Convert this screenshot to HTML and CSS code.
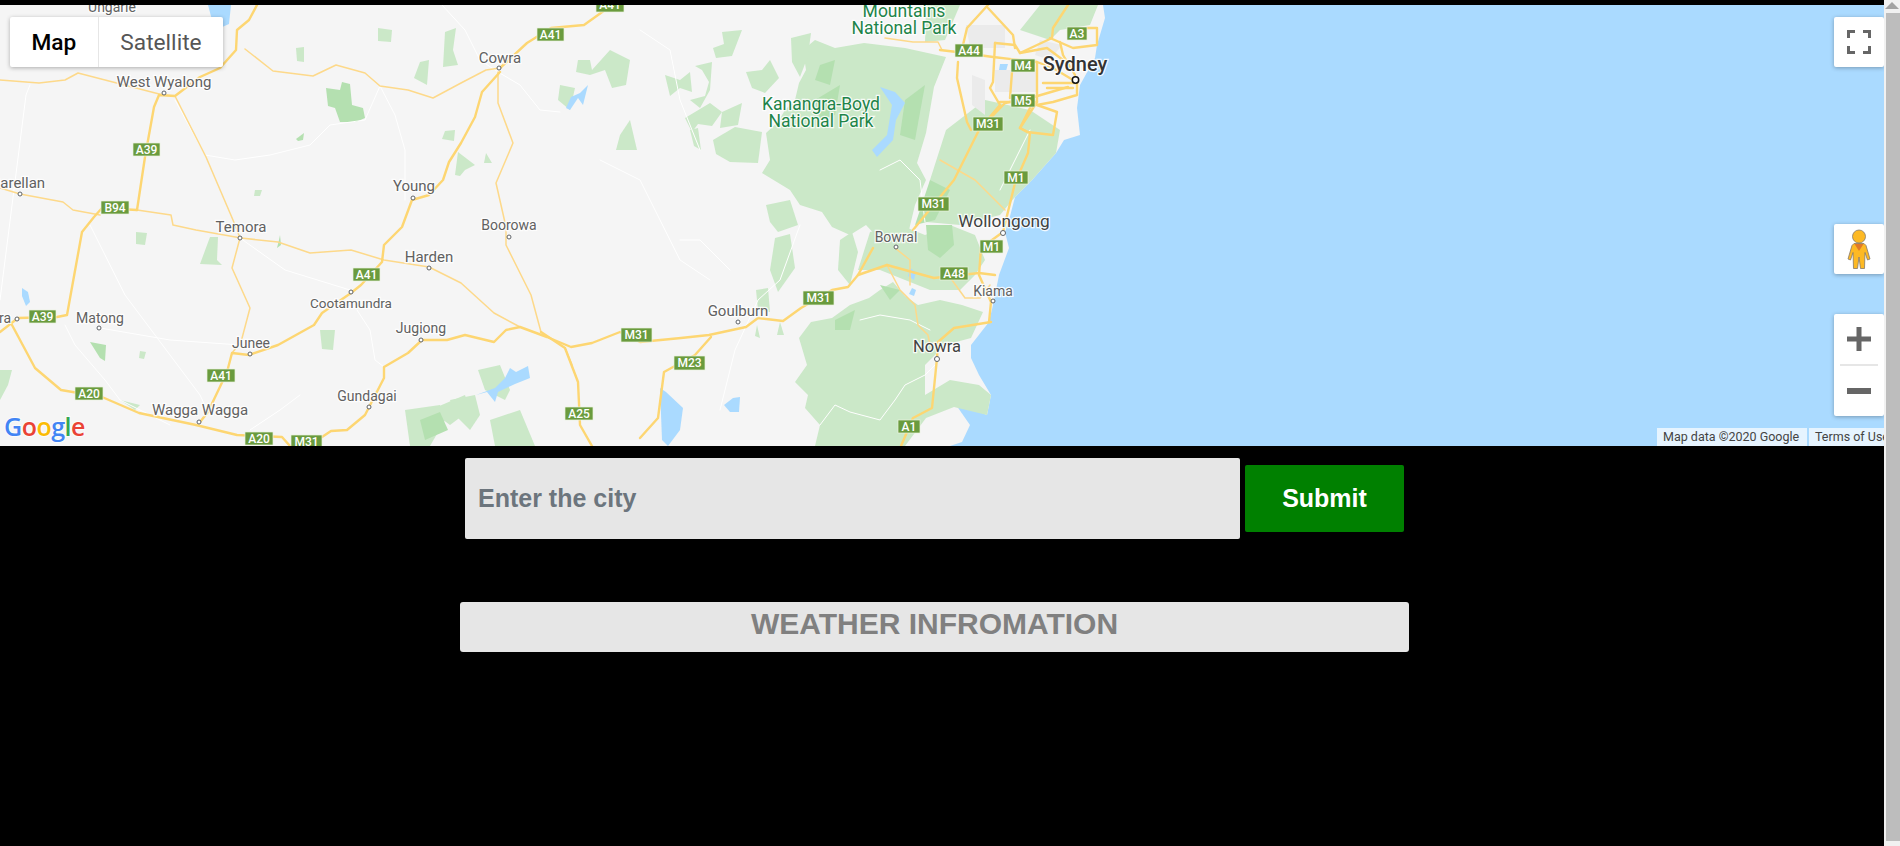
FILE: index.html
```html
<!DOCTYPE html>
<html lang="en">
<head>
    <meta charset="UTF-8">
    <title>Weather Map</title>
    <link rel="stylesheet" href="styles.css">
</head>
<body>

<div class="page">
    <div class="content">

        <div class="map">
            <svg class="map-canvas" viewBox="0 5 1884 441" width="1884" height="441">
                <!-- sea and coast -->
                <path class="water" d="M1103 5L1105 18 1097 45 1095 58 1080 85 1077 108 1080 135 1064 140 1056 153 1032 180 1015 197 1009 220 1005 232 1009 248 999 275 993 305 989 322 971 345 971 358 979 375 991 395 987 415 954 402 970 425 962 442 950 446H1884V5Z"/>

                <!-- parks, light -->
                <path class="park" d="M864 43L905 48 946 57 934 87 926 133 917 163 926 180 915 205 909 230 880 240 866 225 850 235 832 227 822 212 800 205 790 190 762 173 770 160 766 133 778 122 785 110 795 100 799 83 806 70 803 50 815 40 835 48Z"/>
                <path class="park" d="M811 322L832 318 850 305 869 298 880 290 893 282 905 296 918 305 940 300 962 305 983 312 971 338 945 345 925 365 925 395 950 380 979 385 991 395 987 415 954 407 926 418 905 446H815L820 425 805 408 808 395 795 382 807 365 799 338Z"/>
                <path class="park" d="M946 130L985 100 1030 110 1060 130 1056 153 1032 180 1015 197 1000 215 960 225 926 222 930 180Z"/>
                <path class="park" d="M926 5L960 5 945 40 925 42Z"/>
                <path class="park" d="M1040 5H1098L1090 25 1060 30 1050 40 1020 30Z"/>
                <path class="park" d="M870 232L900 225 925 235 950 225 975 235 985 260 975 275 960 290 930 290 905 280 880 270 858 270Z"/>
                <path class="park" d="M840 240L852 232 858 252 850 285 838 270Z"/>
                <!-- scattered bush west of the ranges -->
                <path class="park" d="M665 75L680 80 690 72 692 92 680 88 670 96Z"/>
                <path class="park" d="M690 100L705 96 709 82 702 70 695 66 712 62 710 90 700 108Z"/>
                <path class="park" d="M685 118L710 103 722 112 712 126 698 124 692 132Z"/>
                <path class="park" d="M722 112L742 103 738 125 720 128Z"/>
                <path class="park" d="M690 130L698 128 701 150 694 146Z"/>
                <path class="park" d="M713 140L735 127 762 132 758 163 730 162 716 154Z"/>
                <path class="park" d="M713 48L724 44 722 32 742 30 732 56 716 58Z"/>
                <path class="park" d="M746 72L762 70 770 60 779 78 765 93 752 88Z"/>
                <path class="park" d="M791 38L811 33 808 56 800 77 792 62Z"/>
                <path class="park" d="M766 205L790 200 798 225 778 232 770 222Z"/>
                <path class="park" d="M775 238L790 234 795 268 778 292 770 270Z"/>
                <path class="park" d="M756 290L768 288 770 312 758 310Z"/>
                <path class="park" d="M757 325L760 338 755 336Z"/>
                <path class="park" d="M780 322L784 335 777 335Z"/>
                <path class="park" d="M378 28L392 30 391 42 378 41Z"/>
                <path class="park" d="M296 48L304 47 304 62 297 61Z"/>
                <path class="park" d="M445 32L456 28 453 50 458 65 443 67Z"/>
                <path class="park" d="M420 62L429 60 427 85 414 78Z"/>
                <path class="park" d="M445 131L455 130 454 141 442 139Z"/>
                <path class="park" d="M458 152L475 165 465 170 460 176 455 175Z"/>
                <path class="park" d="M486 153L492 163 484 163Z"/>
                <path class="park" d="M255 190L262 190 260 196 254 196Z"/>
                <path class="park" d="M578 60L590 60 592 70 610 50 630 60 626 85 612 88 605 70 590 75 576 72Z"/>
                <path class="park" d="M620 135L630 120 637 150 616 150Z"/>
                <path class="park" d="M560 85L575 88 570 110 558 100Z"/>
                <path class="park" d="M136 232L147 233 145 245 136 244Z"/>
                <path class="park" d="M210 237L218 237 217 260 222 265 200 264Z"/>
                <path class="park" d="M320 330L335 330 333 350 322 349Z"/>
                <path class="park" d="M140 351L146 352 144 359 139 358Z"/>
                <path class="park" d="M0 370L12 370 8 385 0 400Z"/>
                <path class="park" d="M120 400L140 405 135 410Z"/>
                <path class="park" d="M478 370L500 365 510 390 505 400 485 390Z"/>
                <path class="park" d="M405 410L440 405 445 420 430 446H410Z"/>
                <path class="park" d="M450 400L475 395 480 415 470 430 455 415Z"/>
                <path class="park" d="M490 420L520 410 535 446H495Z"/>
                <path class="park" d="M430 410L465 395 470 410 450 425Z"/>

                <!-- parks, darker patches -->
                <path class="park-dark" d="M326 88L340 90 342 82 350 84 352 105 363 108 365 118 356 122 340 122 335 108 328 106Z"/>
                <path class="park-dark" d="M296 139L304 133 303 140 298 141Z"/>
                <path class="park-dark" d="M280 235L281 245 277 248 279 240Z"/>
                <path class="park-dark" d="M90 342L106 345 105 361 100 358 95 350Z"/>
                <path class="park-dark" d="M926 225L952 225 954 245 940 258 928 250Z"/>
                <path class="park-dark" d="M835 320L855 310 850 330 835 330Z"/>
                <path class="park-dark" d="M880 285L900 290 890 300Z"/>
                <path class="park-dark" d="M820 65L835 60 830 85 815 80Z"/>
                <path class="park-dark" d="M815 100L840 85 835 115 820 120Z"/>
                <path class="park-dark" d="M905 100L925 85 915 140 900 135Z"/>
                <path class="park-dark" d="M930 180L950 190 935 220 915 225Z"/>
                <path class="park-dark" d="M420 420L440 412 448 430 425 440Z"/>

                <!-- lakes -->
                <path class="water" d="M208 5H231L229 24 220 28 212 20Z"/>
                <path class="water" d="M22 288L28 292 30 302 26 306 22 296Z"/>
                <path class="water" d="M476 395L495 388 505 378 510 368 516 372 528 366 530 378 515 384 498 392 495 402 487 392Z"/>
                <path class="water" d="M660 388L666 392 683 408 680 430 668 446 662 440Z"/>
                <path class="water" d="M724 405L733 398 740 397 739 412 730 412Z"/>
                <path class="water" d="M880 87L895 92 905 103 896 120 893 140 877 157 872 150 887 135 892 105Z"/>
                <path class="water" d="M566 108L571 97 580 93 588 85 583 105 578 98 570 110Z"/>
                <path class="water" d="M910 268L916 272 914 280 908 276Z"/>
                <path class="water" d="M912 288L916 290 914 296 909 294Z"/>
                <path class="water" d="M1000 64H1008L1006 71 999 70Z"/>

                <!-- urban grey -->
                <path class="urban" d="M966 25L1005 25 1005 48 970 48Z"/>
                <path class="urban" d="M995 70L1036 70 1036 92 995 92Z"/>
                <path class="urban" d="M972 75L985 80 985 115 972 105Z"/>
                <path class="urban" d="M1040 40L1062 45 1050 60 1035 55Z"/>

                <!-- minor white roads -->
                <g class="road-white">
                    <polyline points="0,300 26,95 30,85"/>
                    <polyline points="175,100 205,155 235,160 270,155 310,145 330,125 365,120 380,86 395,115 405,150 405,200"/>
                    <polyline points="442,5 465,30 480,60 498,72 520,85 540,110 560,112"/>
                    <polyline points="90,225 125,295 200,395 208,412"/>
                    <polyline points="240,238 285,270 350,290"/>
                    <polyline points="100,328 170,340 240,345"/>
                    <polyline points="65,325 75,345 105,380 120,400 170,425"/>
                    <polyline points="357,310 370,330 375,360 384,367"/>
                    <polyline points="250,430 280,410 300,395"/>
                    <polyline points="600,160 640,180 660,220 680,260 710,280"/>
                    <polyline points="640,30 670,50 680,100 700,150"/>
                    <polyline points="680,240 700,240 730,270"/>
                    <polyline points="800,225 780,280 758,300 735,350 720,410"/>
                    <polyline points="820,425 835,405 850,412 880,420 895,400 905,385 925,375 935,365"/>
                    <polyline points="880,170 900,160 920,180 925,222"/>
                    <polyline points="860,320 880,315 910,320 930,330"/>
                    <polyline points="1000,190 1010,170 1030,130"/>
                </g>

                <!-- highways -->
                <g class="road-minor">
                    <polyline points="175,96 206,157 233,220 240,238 232,268 250,308 241,342 232,353"/>
                    <polyline points="498,72 498,103 513,143 496,183 506,227 506,245 531,295 541,332"/>
                    <polyline points="245,49 273,71 313,76 336,65 365,73 380,86 408,90 433,98 461,83 486,70 500,68"/>
                    <polyline points="0,80 39,83 65,80 78,73 163,95"/>
                    <polyline points="0,188 20,194 63,202 73,210 100,215"/>
                    <polyline points="137,210 171,215 173,225 196,230 241,238 278,242 310,253 351,250 384,260 429,267 461,283 494,313 520,327"/>
                    <polyline points="885,38 913,42 938,42 942,50"/>
                    <polyline points="887,265 900,290 915,305 918,325 928,335 930,345 938,342"/>
                    <polyline points="895,248 910,260 910,285"/>
                    <polyline points="952,280 965,298 980,298 990,285"/>
                    <polyline points="940,160 975,180 1005,210"/>
                    <polyline points="565,348 572,365"/>
                </g>
                <g class="road-major">
                    <polyline points="257,5 249,20 237,30 236,50 220,68 200,77 175,96 159,95 154,107 145,157 137,210"/>
                    <polyline points="137,210 102,208 94,217 82,232 67,315 57,317 18,318 0,332"/>
                    <polyline points="500,68 527,43 551,28 584,25 612,5"/>
                    <polyline points="500,72 482,92 475,117 461,143 449,162 443,180 429,195 412,200 402,227 384,245 382,262 361,285 351,293 322,313 314,325 278,345 249,355 232,353 227,372 208,412 200,422"/>
                    <polyline points="12,325 35,368 61,390 102,397 139,413 196,425 237,435 282,437 290,446"/>
                    <polyline points="322,437 331,431 347,430 365,415 384,378 384,367 408,353 422,340 447,340 465,335 494,342 506,330 520,327 547,337 571,347 592,343 620,332 640,342 681,338 709,335 746,327 758,318 783,321 801,308 832,290 848,287 858,275 887,265"/>
                    <polyline points="541,332 565,348 578,382 580,425 592,446"/>
                    <polyline points="711,337 695,355 664,372 658,418 640,438"/>
                    <polyline points="873,248 858,275"/>
                    <polyline points="913,230 954,180 979,130 1005,103 1034,97 1068,87"/>
                    <polyline points="887,265 934,278 979,273 995,275"/>
                    <polyline points="991,322 954,328 938,342 937,358 932,408 913,418 901,446"/>
                    <polyline points="1003,232 981,248 979,275 991,302 989,322"/>
                    <polyline points="1003,232 1015,183 1028,153 1030,133 1020,128 1034,100"/>
                    <polyline points="940,50 957,52 993,57 1037,62 1053,68 1073,80"/>
                    <polyline points="988,5 967,28 963,45"/>
                    <polyline points="988,8 1013,35 1015,48"/>
                    <polyline points="958,62 957,78 967,122 971,130"/>
                    <polyline points="995,43 993,82 990,88 1000,105 983,125"/>
                    <polyline points="995,43 1015,45 1020,53 1047,48 1063,60"/>
                    <polyline points="1068,5 1053,28 1052,38 1020,53"/>
                    <polyline points="1037,62 1037,102 1020,128"/>
                    <polyline points="1037,102 1000,102"/>
                    <polyline points="1012,72 1010,98"/>
                    <polyline points="1043,83 1077,83 1077,95 1053,102 1037,105"/>
                    <polyline points="1047,88 1073,88"/>
                    <polyline points="1050,38 1073,48 1097,45 1097,28 1087,28"/>
                    <polyline points="1037,105 1057,112 1053,135 1027,132 1020,128"/>
                    <polyline points="1060,42 1063,55 1075,75"/>
                </g>

                <!-- route shields -->
                <g class="shields">
                    <rect x="596" y="0" width="28" height="12"/><text x="610" y="9">A41</text>
                    <rect x="537" y="28" width="27" height="13"/><text x="550.5" y="39">A41</text>
                    <rect x="133" y="143" width="27" height="13"/><text x="146.5" y="154">A39</text>
                    <rect x="101" y="201" width="28" height="13"/><text x="115" y="212">B94</text>
                    <rect x="29" y="310" width="27" height="13"/><text x="42.5" y="321">A39</text>
                    <rect x="353" y="268" width="27" height="13"/><text x="366.5" y="279">A41</text>
                    <rect x="207" y="369" width="28" height="13"/><text x="221" y="380">A41</text>
                    <rect x="75" y="387" width="28" height="13"/><text x="89" y="398">A20</text>
                    <rect x="245" y="432" width="28" height="13"/><text x="259" y="443">A20</text>
                    <rect x="291" y="435" width="31" height="14"/><text x="306.5" y="446">M31</text>
                    <rect x="565" y="407" width="28" height="13"/><text x="579" y="418">A25</text>
                    <rect x="621" y="328" width="31" height="14"/><text x="636.5" y="339">M31</text>
                    <rect x="955" y="44" width="28" height="13"/><text x="969" y="55">A44</text>
                    <rect x="1067" y="27" width="20" height="13"/><text x="1077" y="38">A3</text>
                    <rect x="1011" y="59" width="24" height="13"/><text x="1023" y="70">M4</text>
                    <rect x="1011" y="94" width="24" height="13"/><text x="1023" y="105">M5</text>
                    <rect x="973" y="117" width="30" height="14"/><text x="988" y="128">M31</text>
                    <rect x="1004" y="171" width="24" height="13"/><text x="1016" y="182">M1</text>
                    <rect x="918" y="197" width="31" height="14"/><text x="933.5" y="208">M31</text>
                    <rect x="980" y="240" width="23" height="13"/><text x="991.5" y="251">M1</text>
                    <rect x="940" y="267" width="28" height="13"/><text x="954" y="278">A48</text>
                    <rect x="803" y="291" width="31" height="14"/><text x="818.5" y="302">M31</text>
                    <rect x="674" y="356" width="31" height="14"/><text x="689.5" y="367">M23</text>
                    <rect x="898" y="420" width="22" height="13"/><text x="909" y="431">A1</text>
                </g>

                <!-- towns -->
                <g class="town-dots">
                    <circle cx="164" cy="93" r="2"/><circle cx="499" cy="68" r="2"/>
                    <circle cx="20" cy="194" r="2"/><circle cx="413" cy="198" r="2"/>
                    <circle cx="240" cy="238" r="2"/><circle cx="509" cy="237" r="2"/>
                    <circle cx="429" cy="268" r="2"/><circle cx="351" cy="292" r="2"/>
                    <circle cx="99" cy="328" r="2"/><circle cx="421" cy="340" r="2"/>
                    <circle cx="250" cy="354" r="2"/><circle cx="369" cy="407" r="2"/>
                    <circle cx="199" cy="422" r="2"/><circle cx="17" cy="319" r="2"/>
                    <circle cx="896" cy="247" r="2"/><circle cx="993" cy="301" r="2"/>
                    <circle cx="738" cy="322" r="2"/><circle cx="937" cy="359" r="2.5"/>
                    <circle cx="1003" cy="233" r="2.5"/>
                </g>
                <circle class="capital-dot" cx="1075.5" cy="80" r="3.2"/>

                <g class="labels">
                    <text x="112" y="12">Ungarie</text>
                    <text class="label-wide" x="164" y="87">West Wyalong</text>
                    <text class="label-wide" x="500" y="63">Cowra</text>
                    <text class="label-wide" x="18" y="188">Barellan</text>
                    <text class="label-wide" x="414" y="191">Young</text>
                    <text class="label-wide" x="241" y="232">Temora</text>
                    <text x="509" y="230">Boorowa</text>
                    <text class="label-wide" x="429" y="262">Harden</text>
                    <text class="label-narrow" x="351" y="308">Cootamundra</text>
                    <text x="100" y="323">Matong</text>
                    <text x="421" y="333">Jugiong</text>
                    <text x="251" y="348">Junee</text>
                    <text x="367" y="401">Gundagai</text>
                    <text class="label-wide" x="200" y="415">Wagga Wagga</text>
                    <text x="5" y="323">ra</text>
                    <text x="896" y="242">Bowral</text>
                    <text x="993" y="296">Kiama</text>
                    <text class="label-wide" x="738" y="316">Goulburn</text>
                </g>
                <g class="labels labels-big">
                    <text x="937" y="352">Nowra</text>
                    <text class="label-city" x="1004" y="227">Wollongong</text>
                </g>
                <text class="label-capital" x="1075" y="71">Sydney</text>
                <g class="labels labels-park">
                    <text x="904" y="17">Mountains</text>
                    <text x="904" y="34">National Park</text>
                    <text x="821" y="110">Kanangra-Boyd</text>
                    <text x="821" y="127">National Park</text>
                </g>

                <text class="google-logo" x="4" y="436"><tspan class="g-blue">G</tspan><tspan class="g-red">o</tspan><tspan class="g-yellow">o</tspan><tspan class="g-blue">g</tspan><tspan class="g-green">l</tspan><tspan class="g-red">e</tspan></text>
            </svg>

            <div class="map-type">
                <div class="map-type-btn active">Map</div>
                <div class="map-type-btn">Satellite</div>
            </div>

            <div class="ctrl ctrl-fullscreen">
                <svg viewBox="0 0 24 24" width="24" height="24">
                    <path class="icon-stroke" d="M1.5 8V1.5H8M16 1.5H22.5V8M22.5 16V22.5H16M8 22.5H1.5V16"/>
                </svg>
            </div>

            <div class="ctrl ctrl-pegman">
                <svg viewBox="0 0 24 40" width="24" height="40">
                    <path class="peg-body" d="M7 14.5H17L19 16.500 23 30 20.500 31 18 23.500 17.500 39.500H13.500L12 28 10.500 39.500H6.500L6 23.500 3.500 31 1 30 5 16.500Z"/>
                    <path class="peg-scarf" d="M7.500 15H16.500L12 22Z"/>
                    <circle class="peg-head" cx="12" cy="7.500" r="6.500"/>
                </svg>
            </div>

            <div class="ctrl ctrl-zoom">
                <div class="zoom-btn">
                    <svg viewBox="0 0 24 24" width="24" height="24"><path class="icon-fill" d="M9.500 0H14.500V9.500H24V14.500H14.500V24H9.500V14.500H0V9.500H9.500Z"/></svg>
                </div>
                <div class="zoom-divider"></div>
                <div class="zoom-btn">
                    <svg viewBox="0 0 24 6" width="24" height="6"><rect class="icon-fill" width="24" height="6"/></svg>
                </div>
            </div>

            <div class="attribution">
                <span class="attr-item attr-data">Map data ©2020 Google</span>
                <span class="attr-item attr-terms">Terms of Use</span>
            </div>
        </div>

        <form class="city-form">
            <input class="city-input" type="text" placeholder="Enter the city">
            <button class="submit-btn" type="button">Submit</button>
        </form>

        <div class="weather-box">
            <h2 class="weather-title">WEATHER INFROMATION</h2>
        </div>

    </div>

    <div class="scrollbar">
        <div class="scroll-up"></div>
        <div class="scroll-thumb"></div>
    </div>
</div>

</body>
</html>
```

FILE: styles.css
```css
body {
    margin: 0;
    background-color: #000;
    font-family: "Liberation Sans", Arial, sans-serif;
    overflow: hidden;
}

.page {
    display: flex;
    height: 846px;
}

.content {
    flex: 1;
    padding-top: 5px;
    min-width: 0;
}

/* map */
.map {
    position: relative;
    height: 441px;
    overflow: hidden;
    background-color: #f5f5f5;
}

.map-canvas {
    display: block;
}

.water { fill: #aadaff; }
.park { fill: #cbe8c8; }
.park-dark { fill: #b4e0b0; }
.urban { fill: #ebebeb; }

.road-white polyline,
.road-minor polyline,
.road-major polyline {
    fill: none;
    stroke-linejoin: round;
    stroke-linecap: round;
}

.road-white polyline { stroke: #fff; stroke-width: 1; }
.road-minor polyline { stroke: #fdd98a; stroke-width: 1.5; }
.road-major polyline { stroke: #fdd672; stroke-width: 2.4; }

.shields rect {
    fill: #6a9b3e;
    stroke: #eaf2e0;
    stroke-width: 0.7;
}

.shields text {
    fill: #fff;
    font-family: Roboto, sans-serif;
    font-size: 12px;
    font-weight: 500;
    text-anchor: middle;
}

.town-dots circle {
    fill: #fff;
    stroke: #5f6368;
    stroke-width: 1;
}

.capital-dot {
    fill: #fff;
    stroke: #111;
    stroke-width: 1.5;
}

.labels text,
.label-capital {
    font-family: Roboto, sans-serif;
    text-anchor: middle;
    stroke: #fff;
    stroke-width: 2.5px;
    stroke-opacity: 0.85;
    paint-order: stroke;
}

.labels text {
    fill: #616161;
    font-size: 14px;
}

.labels .label-wide { font-size: 15px; }
.labels .label-narrow { font-size: 13.500px; }

.labels-big text {
    fill: #424242;
    font-size: 16.500px;
}

.labels-big .label-city { font-size: 17.300px; }

.label-capital {
    fill: #333;
    font-size: 20px;
    font-weight: 500;
}

.labels-park text {
    fill: #1e8449;
    font-size: 17.500px;
}

.google-logo {
    font-family: "Open Sans", sans-serif;
    font-size: 25px;
    font-weight: 600;
    letter-spacing: -0.5px;
    stroke: #fff;
    stroke-width: 2px;
    stroke-opacity: 0.7;
    paint-order: stroke;
}

.g-blue { fill: #4285f4; }
.g-red { fill: #ea4335; }
.g-yellow { fill: #fbbc05; }
.g-green { fill: #34a853; }

/* map controls */
.map-type {
    position: absolute;
    top: 12px;
    left: 10px;
    display: flex;
    height: 50px;
    background-color: #fff;
    border-radius: 2px;
    box-shadow: 0 1px 4px rgba(0, 0, 0, 0.3);
    font-family: Roboto, sans-serif;
    font-size: 22.700px;
}

.map-type-btn {
    display: flex;
    align-items: center;
    padding: 0 21.500px;
    color: #565656;
}

.map-type-btn.active {
    padding: 0 21.500px;
    color: #000;
    font-weight: 500;
    border-right: 1px solid #e6e6e6;
}

.ctrl {
    position: absolute;
    right: 0;
    width: 50px;
    background-color: #fff;
    border-radius: 2px;
    box-shadow: 0 1px 4px rgba(0, 0, 0, 0.3);
    display: flex;
    align-items: center;
    justify-content: center;
}

.ctrl-fullscreen {
    top: 12px;
    height: 50px;
}

.ctrl-pegman {
    top: 219px;
    height: 50px;
}

.ctrl-zoom {
    top: 309px;
    height: 102px;
    flex-direction: column;
}

.zoom-btn {
    flex: 1;
    display: flex;
    align-items: center;
    justify-content: center;
}

.zoom-divider {
    width: 38px;
    height: 2px;
    background-color: #e6e6e6;
}

.icon-stroke {
    fill: none;
    stroke: #666;
    stroke-width: 3;
}

.icon-fill { fill: #666; }

.peg-body {
    fill: #fdb924;
    stroke: #85796a;
    stroke-width: 0.8;
}

.peg-scarf { fill: #e0792a; }

.peg-head {
    fill: #fdb924;
    stroke: #85796a;
    stroke-width: 0.8;
}

.attribution {
    position: absolute;
    right: 0;
    bottom: 0;
    display: flex;
    gap: 2px;
    width: 227px;
    height: 18px;
    overflow: hidden;
    font-family: Roboto, sans-serif;
    font-size: 12.500px;
    line-height: 18px;
    color: #444;
    white-space: nowrap;
}

.attr-item {
    background-color: rgba(255, 255, 255, 0.7);
    padding: 0 6px;
}

.attr-data {
    flex: 0 0 150px;
    box-sizing: border-box;
}

.attr-terms {
    flex: 1;
}

/* form */
.city-form {
    display: flex;
    align-items: center;
    gap: 5px;
    margin-top: 12px;
    padding-left: 465px;
}

.city-input {
    box-sizing: border-box;
    width: 775px;
    height: 81px;
    padding: 0 13px;
    border: none;
    border-radius: 2px;
    background-color: #e6e6e6;
    font-family: "Liberation Sans", Arial, sans-serif;
    font-size: 25px;
    font-weight: bold;
}

.city-input::placeholder {
    color: #6c757d;
    opacity: 1;
}

.submit-btn {
    width: 159px;
    height: 67px;
    border: none;
    border-radius: 2px;
    background-color: green;
    color: white;
    font-family: "Liberation Sans", Arial, sans-serif;
    font-size: 25px;
    font-weight: bold;
}

.weather-box {
    width: 949px;
    height: 50px;
    margin: 63px 0 0 460px;
    border-radius: 3px;
    background-color: #e6e6e6;
    text-align: center;
}

.weather-title {
    margin: 0;
    padding-top: 5px;
    font-size: 30px;
    line-height: 34px;
    color: #808080;
}

/* scrollbar on the right edge */
.scrollbar {
    width: 16px;
    background-color: #f1f1f1;
    display: flex;
    flex-direction: column;
    align-items: flex-end;
}

.scroll-up {
    width: 0;
    height: 0;
    margin: 2px 1px 4px 0;
    border-left: 7px solid transparent;
    border-right: 7px solid transparent;
    border-bottom: 7px solid #a3a3a3;
}

.scroll-thumb {
    width: 14px;
    height: 828px;
    background-color: #bdbdbd;
}
```
